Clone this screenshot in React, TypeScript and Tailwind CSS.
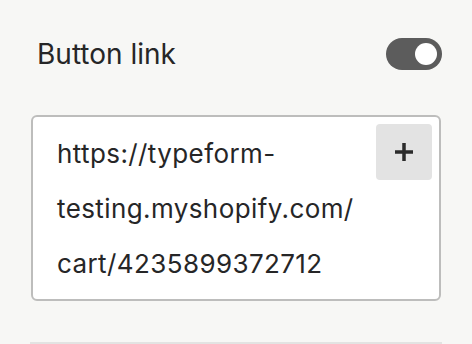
import React from 'react';

function Toggle() {
  return (
    <div className="flex h-[32px] w-[56px] items-center justify-end rounded-full bg-[#5c5c5c] pr-[5px]">
      <div className="h-[22px] w-[22px] rounded-full bg-white" />
    </div>
  );
}

export default function App() {
  return (
    <div
      className="h-[344px] w-[472px] overflow-hidden bg-[#f7f7f5] text-[#262627]"
      style={{ fontFamily: 'Inter, "Noto Sans", sans-serif' }}
    >
      <div className="ml-[31px] w-[411px] pt-[38px]">
        {/* label + toggle */}
        <div className="flex h-[32px] items-center justify-between pl-[6px]">
          <span className="text-[28px] leading-none">Button link</span>
          <Toggle />
        </div>

        {/* url field */}
        <div className="mt-[45px] flex h-[186px] w-[410px] rounded-[6px] border-2 border-[#bdbdbc] bg-white">
          <div className="flex-1 pl-[24px] pt-[9px] text-[26px] leading-[55px] tracking-[0.4px]">
            https://typeform-
            <br />
            testing.myshopify.com/
            <br />
            cart/4235899372712
          </div>
          <div className="pr-[7px] pt-[7px]">
            <button className="flex h-[56px] w-[56px] items-center justify-center rounded-[4px] bg-[#e3e3e3]">
              <svg width="20" height="20" viewBox="0 0 20 20" fill="none">
                <path d="M10 1v18M1 10h18" stroke="#2b2b2b" strokeWidth="3.5" strokeLinecap="butt" />
              </svg>
            </button>
          </div>
        </div>

        {/* next field, cut off */}
        <div className="ml-[-1px] mt-[41px] h-[20px] w-[412px] bg-[#e3e3e2]" />
      </div>
    </div>
  );
}
